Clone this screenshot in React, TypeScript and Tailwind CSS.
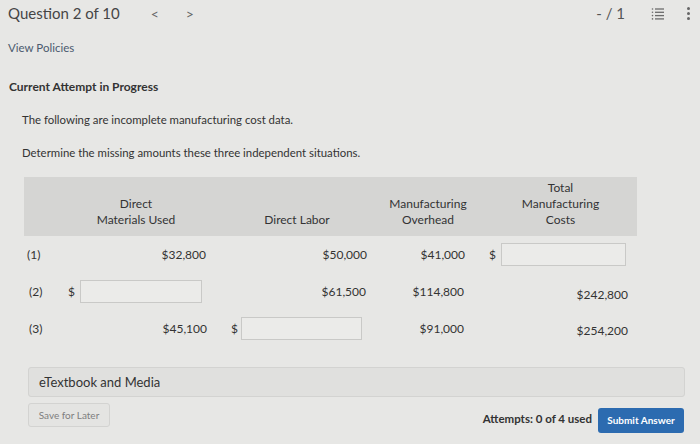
import React from "react";

const font = { fontFamily: "Lato, 'Open Sans', sans-serif" };

function ListIcon() {
  return (
    <svg width="14" height="14" viewBox="0 0 14 14" fill="none" stroke="#6b6b6b" strokeWidth="1.3">
      <circle cx="1.5" cy="2" r="0.8" fill="#6b6b6b" stroke="none" />
      <circle cx="1.5" cy="5.3" r="0.8" fill="#6b6b6b" stroke="none" />
      <circle cx="1.5" cy="8.6" r="0.8" fill="#6b6b6b" stroke="none" />
      <circle cx="1.5" cy="11.9" r="0.8" fill="#6b6b6b" stroke="none" />
      <line x1="4" y1="2" x2="13" y2="2" />
      <line x1="4" y1="5.3" x2="13" y2="5.3" />
      <line x1="4" y1="8.6" x2="13" y2="8.6" />
      <line x1="4" y1="11.9" x2="13" y2="11.9" />
    </svg>
  );
}

function Input({ w }: { w: string }) {
  return <input className={`${w} h-[23px] bg-[#ebebe9] border border-[#c9c9c7] outline-none`} />;
}

export default function App() {
  return (
    <div className="w-[700px] h-[444px] bg-[#e7e7e5] text-[#333] overflow-hidden" style={font}>
      <div className="flex items-center h-[27px] pl-[8px] pr-[8px]">
        <span className="text-[15px] text-[#454545]">Question 2 of 10</span>
        <span className="ml-[31px] text-[14px] text-[#666]">&lt;</span>
        <span className="ml-[27px] text-[14px] text-[#666]">&gt;</span>
        <span className="ml-auto text-[15px] text-[#555]">- / 1</span>
        <span className="ml-[26px]"><ListIcon /></span>
        <span className="ml-[22px] flex flex-col gap-[2px] items-center mr-[2px]">
          <span className="w-[3px] h-[3px] rounded-full bg-[#666]" />
          <span className="w-[3px] h-[3px] rounded-full bg-[#666]" />
          <span className="w-[3px] h-[3px] rounded-full bg-[#666]" />
        </span>
      </div>
      <div className="pl-[8px] mt-[12px] text-[11.5px] text-[#4b5a6e]">View Policies</div>
      <div className="pl-[9px] mt-[22px] text-[12px] font-bold text-[#333]">Current Attempt in Progress</div>
      <div className="pl-[22px] mt-[15px] text-[11.4px]">The following are incomplete manufacturing cost data.</div>
      <div className="pl-[22px] mt-[16px] text-[11.4px]">Determine the missing amounts these three independent situations.</div>

      <div className="ml-[24px] mt-[16px] w-[613px] text-[12px]">
        <div className="flex items-end h-[59px] bg-[#d5d5d3] pb-[8px] leading-[16px] text-center">
          <div className="w-[40px]" />
          <div className="w-[148px] pr-[4px]">Direct<br />Materials Used</div>
          <div className="w-[160px] pl-[10px]">Direct Labor</div>
          <div className="w-[106px] pl-[6px]">Manufacturing<br />Overhead</div>
          <div className="w-[159px] pl-[6px]">Total<br />Manufacturing<br />Costs</div>
        </div>

        <div className="flex items-center h-[37px]">
          <div className="w-[40px] pl-[3px]">(1)</div>
          <div className="w-[148px] text-right pr-[6px]">$32,800</div>
          <div className="w-[160px] text-right pr-[5px]">$50,000</div>
          <div className="w-[106px] text-right pr-[13px]">$41,000</div>
          <div className="w-[159px] flex items-center pl-[11px]">
            <span className="w-[12px]">$</span>
            <Input w="w-[125px]" />
          </div>
        </div>

        <div className="flex items-center h-[37px]">
          <div className="w-[40px] pl-[5px]">(2)</div>
          <div className="w-[148px] flex items-center pl-[4px]">
            <span className="w-[12px]">$</span>
            <Input w="w-[122px]" />
          </div>
          <div className="w-[160px] text-right pr-[6px]">$61,500</div>
          <div className="w-[106px] text-right pr-[14px]">$114,800</div>
          <div className="w-[159px] text-right pr-[9px] pt-[6px]">$242,800</div>
        </div>

        <div className="flex items-center h-[37px]">
          <div className="w-[40px] pl-[5px]">(3)</div>
          <div className="w-[148px] text-right pr-[5px]">$45,100</div>
          <div className="w-[160px] flex items-center pl-[19px]">
            <span className="w-[10px]">$</span>
            <Input w="w-[121px]" />
          </div>
          <div className="w-[106px] text-right pr-[14px]">$91,000</div>
          <div className="w-[159px] text-right pr-[9px] pt-[4px]">$254,200</div>
        </div>
      </div>

      <div className="ml-[28px] mt-[20px] w-[657px] h-[30px] flex items-center pl-[10px] bg-[#e0e0de] border border-[#d3d3d1] rounded-[3px] text-[13px] text-[#333]">
        eTextbook and Media
      </div>

      <div className="flex items-start ml-[28px] mr-[16px] mt-[6px]">
        <button className="h-[24px] w-[82px] text-[10px] text-[#7e7e7e] bg-[#e4e4e2] border border-[#d3d3d1] rounded-[3px]">
          Save for Later
        </button>
        <span className="ml-auto mt-[7px] text-[11.5px] font-bold text-[#333]">Attempts: 0 of 4 used</span>
        <button className="ml-[6px] mt-[5px] h-[25px] w-[86px] text-[10px] font-bold text-white bg-[#2c6bb0] rounded-[3px]">
          Submit Answer
        </button>
      </div>
    </div>
  );
}
